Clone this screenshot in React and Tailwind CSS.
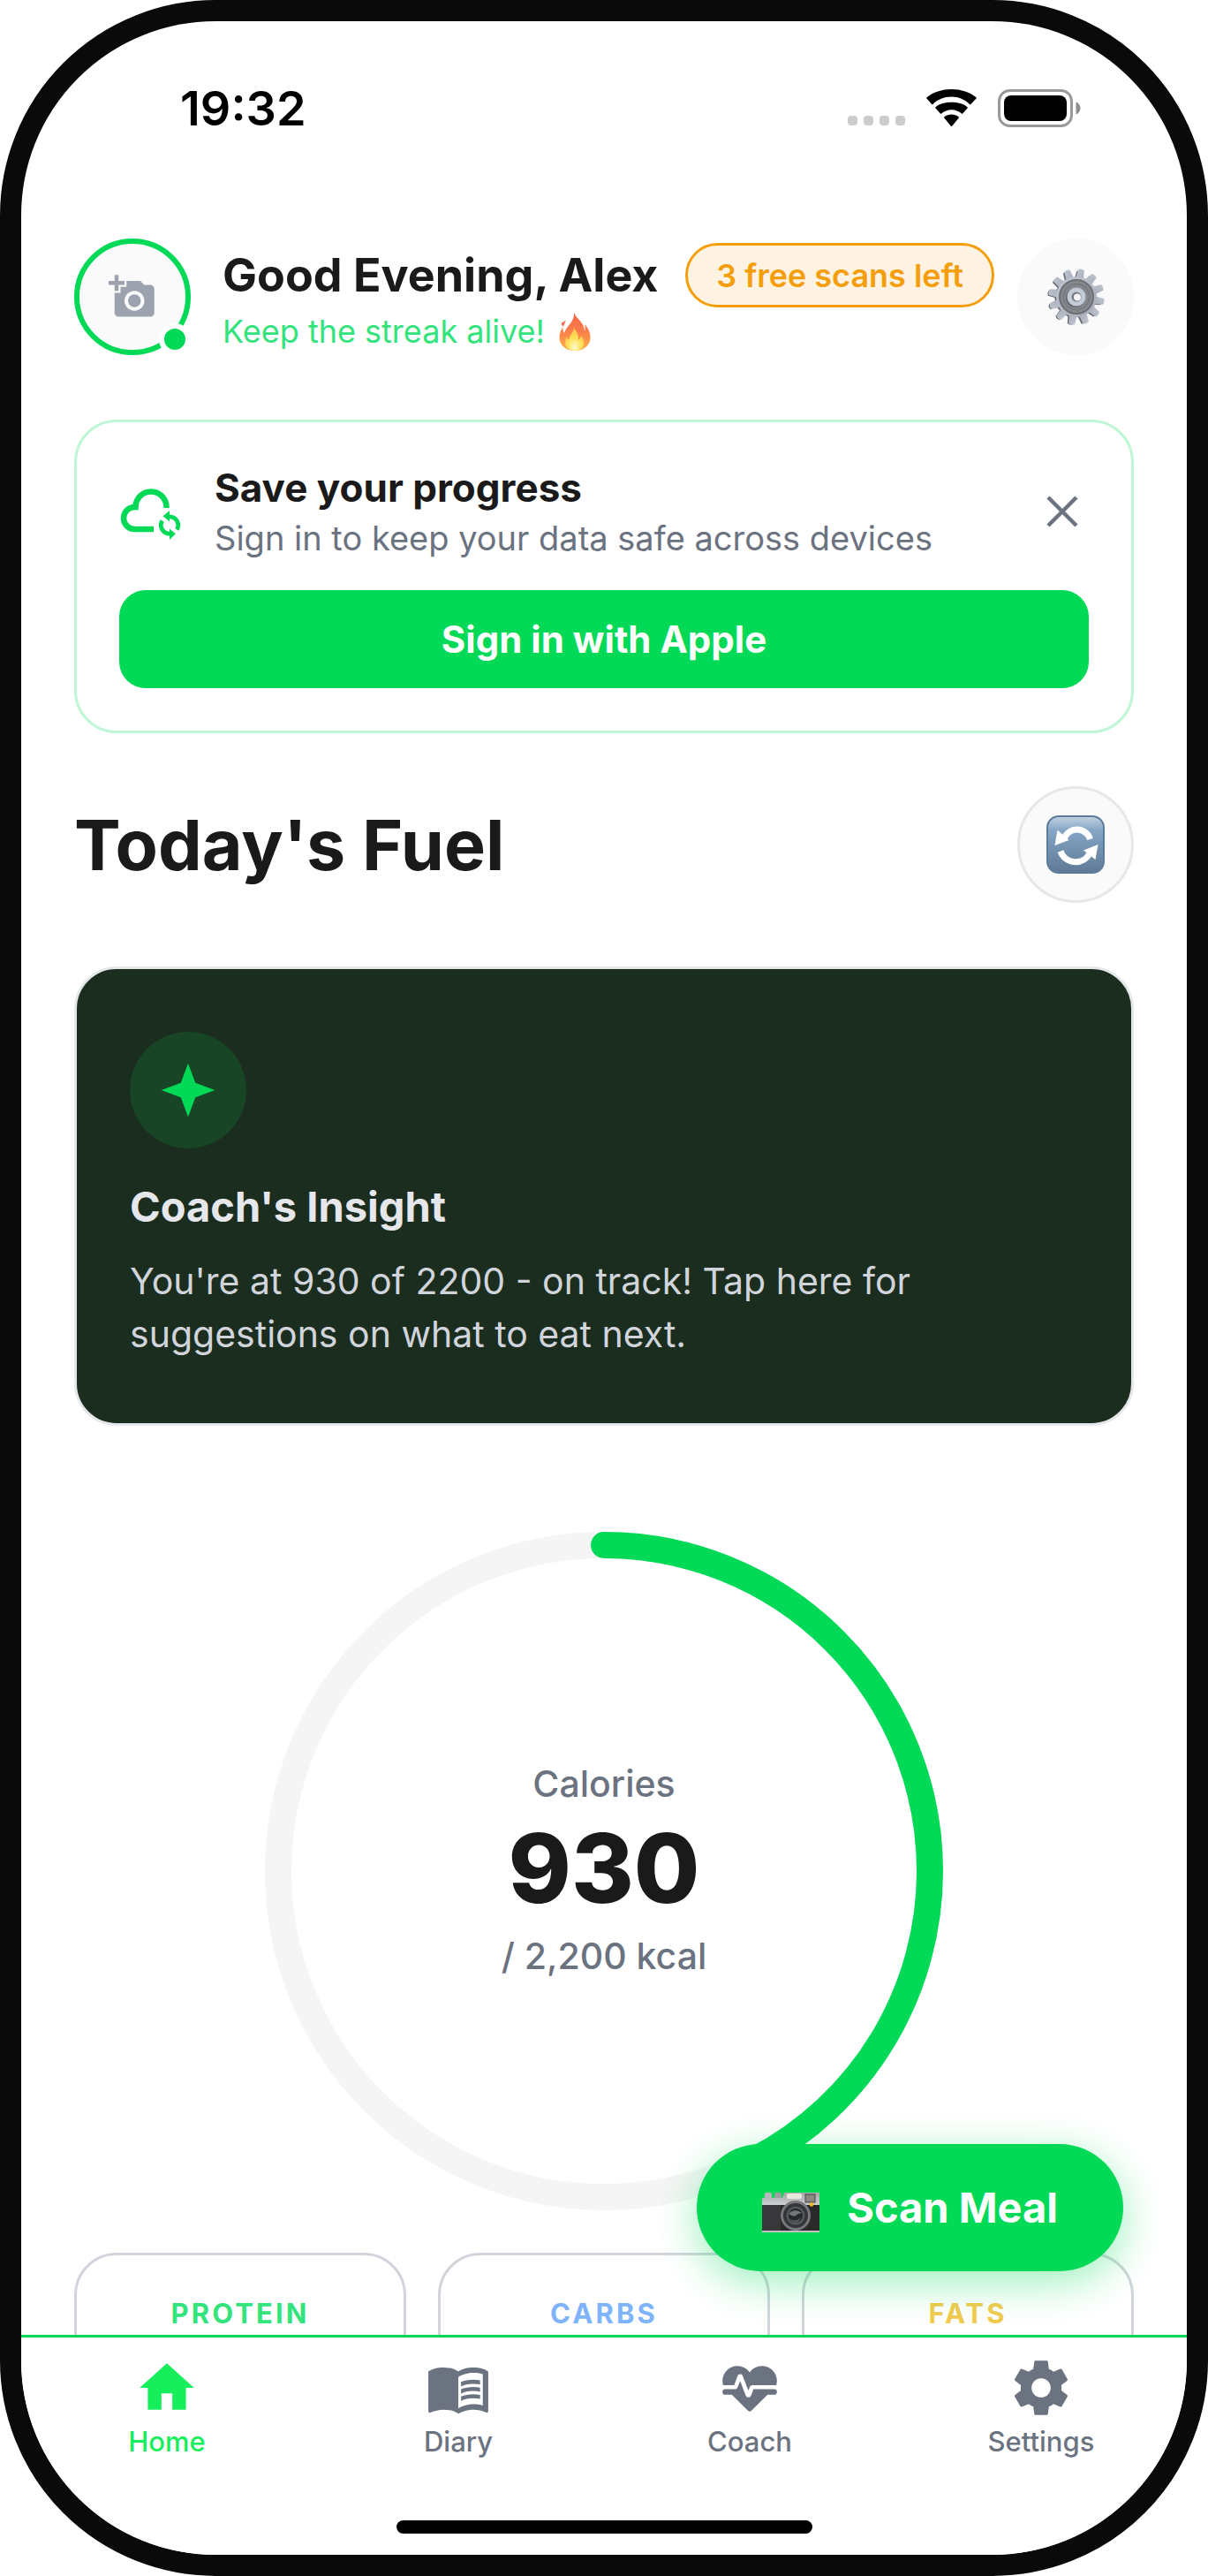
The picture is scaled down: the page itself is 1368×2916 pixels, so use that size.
import { MdAddAPhoto, MdHome, MdMenuBook } from "react-icons/md";

const GOAL = 2200;
const EATEN = 930;

const macros = [
  { label: "PROTEIN", color: "text-[#33e37c]" },
  { label: "CARBS", color: "text-[#7fb4fb]" },
  { label: "FATS", color: "text-[#f3cb50]" },
];

function WifiIcon() {
  return (
    <svg viewBox="0 0 57 42" className="w-[57px] h-[42px]" fill="#000">
      <path d="M28.500 8.600c7.900 0 15.100 3.100 20.400 8.300.4.400 1 .4 1.400 0l6.200-6.300c.3-.4.3-1 0-1.400C49.400 3.400 39.400 0 28.500 0S7.600 3.400.5 9.200c-.4.400-.4 1 0 1.400l5.600 6.400c.4.400 1 .4 1.400 0 5.400-5.300 12.700-8.400 21-8.400Z" />
      <path d="M28.500 23.200c4.400 0 8.300 1.600 11.400 4.300.4.400 1 .3 1.300 0l5.300-5.900c.4-.4.400-1 0-1.400-4.800-4.200-11-5.500-18-5.500s-13.200 1.300-18 5.500c-.4.400-.4 1 0 1.400l5.300 5.900c.3.300.9.400 1.300 0 3.100-2.700 7-4.300 11.400-4.300Z" />
      <path d="M36.700 32.600c.4-.4.400-1-.1-1.300-4.700-3.600-11.500-3.600-16.200 0-.5.300-.5.900-.1 1.300l7.300 8.900c.5.600 1.300.6 1.800 0l7.300-8.900Z" />
    </svg>
  );
}

function BatteryIcon() {
  return (
    <svg viewBox="0 0 94 43" className="w-[94px] h-[43px]">
      <rect x="1.500" y="1.500" width="82" height="40" rx="12" fill="none" stroke="#999" strokeWidth="3" />
      <rect x="7" y="7" width="71" height="29" rx="8" fill="#000" />
      <path d="M88.500 14.500c3 1 5 3.800 5 7s-2 6-5 7Z" fill="#8d8d8d" />
    </svg>
  );
}

function FlameEmoji() {
  return (
    <svg viewBox="0 0 36 43" className="w-9 h-[43px]">
      <defs>
        <linearGradient id="flame" x1="0" y1="0" x2="0" y2="1">
          <stop offset="0" stopColor="#f4654a" />
          <stop offset="0.5" stopColor="#fb7f4a" />
          <stop offset="1" stopColor="#fdb447" />
        </linearGradient>
        <radialGradient id="flameCore" cx="0.5" cy="0.85" r="0.7">
          <stop offset="0" stopColor="#fffbd0" />
          <stop offset="0.5" stopColor="#ffe25a" />
          <stop offset="1" stopColor="#ffc14d" />
        </radialGradient>
      </defs>
      <path d="M17 0c2 6 12 11 12 21 1-2 1-5 0-8 4 4 7 10 6.500 16C35 37 28 43 18 43S1 37 .5 29c-.3-5 1.500-9 4-13-.3 3 .1 5 1.500 7 1-4 4-7 7-11 3-4 4.500-8 4-12Z" fill="url(#flame)" />
      <path d="M3 11c2 0 3-2 5-2-1 2-2 3-2 5-1 2-4 1-3-3Z" fill="#f9745a" />
      <path d="M17 15c0 4 3 5 4 9 1 3 1 5 .5 7 2-1 3-3 3.500-5 2 3 4 6 3 10-1 4-5 7-10 7s-11-3-11-9c0-3 1-5 2-7 0 2 1 3 2 4 1-6 6-9 6-16Z" fill="url(#flameCore)" />
    </svg>
  );
}

function GearEmoji() {
  const teeth = Array.from({ length: 12 }, (_, i) => i * 30 + 10);
  return (
    <svg viewBox="0 0 66 66" className="w-[66px] h-[66px]">
      <defs>
        <linearGradient id="steel" x1="0" y1="0" x2="1" y2="1">
          <stop offset="0" stopColor="#bfc7d2" />
          <stop offset="1" stopColor="#a9acb8" />
        </linearGradient>
      </defs>
      {/* darker copy behind gives the edge depth */}
      <g fill="#62666d">
        {teeth.map((a) => (
          <path key={a} d="M29 13l1-10q3-2 6 0l1 10Z" transform={`translate(-1 1) rotate(${a} 33 33)`} />
        ))}
        <circle cx="32" cy="34" r="22.500" />
      </g>
      <g fill="url(#steel)">
        {teeth.map((a) => (
          <path key={a} d="M28.500 13l1-11q3.500-2 7 0l1 11Z" transform={`translate(1 0) rotate(${a} 33 33)`} />
        ))}
        <circle cx="34" cy="33" r="23" />
      </g>
      <circle cx="34" cy="33" r="19" fill="#85888d" />
      <circle cx="34" cy="33" r="19" fill="none" stroke="#6c7075" strokeWidth="2" />
      <circle cx="34" cy="33" r="14.500" fill="none" stroke="#74777c" strokeWidth="1.500" />
      <circle cx="33" cy="34" r="11" fill="#66696e" />
      <circle cx="34" cy="33" r="10.500" fill="#c3cbd6" />
      <circle cx="34" cy="33" r="5.500" fill="#777b83" />
      <circle cx="35" cy="33.500" r="4" fill="#f4f4f5" />
    </svg>
  );
}

function RefreshEmoji() {
  return (
    <svg viewBox="0 0 66 66" className="w-[66px] h-[66px]">
      <defs>
        <linearGradient id="key" x1="0" y1="0" x2="0" y2="1">
          <stop offset="0" stopColor="#c3d3e2" />
          <stop offset="0.250" stopColor="#84a5c5" />
          <stop offset="1" stopColor="#5f7a96" />
        </linearGradient>
      </defs>
      <rect x="1" y="1" width="64" height="64" rx="13" fill="url(#key)" stroke="#5c7c9c" strokeWidth="2" />
      <g fill="none" stroke="#fff" strokeWidth="7">
        <path d="M20 26.500A15.500 15.500 0 0 1 49.500 27" />
        <path d="M16 40.500A18 18 0 0 0 49 43" />
      </g>
      <path d="M12.500 16.500 9.500 34l16-6Z" fill="#fff" />
      <path d="M58.500 33 42 39.500l13.500 10.500Z" fill="#fff" />
    </svg>
  );
}

function CameraEmoji() {
  return (
    <svg viewBox="0 -10 66 55" className="w-[66px] h-[55px]">
      <defs>
        <linearGradient id="camTop" x1="0" y1="0" x2="0" y2="1">
          <stop offset="0" stopColor="#a4a6a8" />
          <stop offset="1" stopColor="#cdced0" />
        </linearGradient>
      </defs>
      <rect x="3" y="0" width="8" height="8" rx="1.500" fill="#b6b7b9" />
      <rect x="14" y="0" width="8" height="8" rx="1.500" fill="#9d9fa1" />
      <path d="M0 7q0-1 1-1h22l2-6h40v14H0Z" fill="url(#camTop)" />
      <rect x="0" y="14" width="65" height="29" fill="#2a2a2b" />
      <rect x="0" y="14" width="21" height="29" fill="#38383a" />
      <rect x="0" y="43" width="65" height="2" fill="#bfc1c2" />
      <rect x="28" y="1" width="17" height="6" rx="2" fill="#eae8dd" />
      <rect x="49" y="2" width="11" height="9" fill="#8b8880" stroke="#454545" strokeWidth="1" />
      <circle cx="38" cy="26" r="17" fill="#77797c" />
      <circle cx="38" cy="26" r="14" fill="#333539" />
      <circle cx="38" cy="26" r="10.500" fill="#55595e" />
      <circle cx="38" cy="26" r="8" fill="#26292c" />
      <path d="M30 24q7-7 15-1-5 1-7 3t-8-2Z" fill="#6f757b" />
      <path d="M32 30q6 4 12-2-2 6-6 6t-6-4Z" fill="#53585d" />
      <circle cx="56" cy="13.500" r="2.200" fill="#f6b920" />
    </svg>
  );
}

function CloudSyncIcon() {
  return (
    <svg viewBox="5 -3 84 84" className="w-[84px] h-[84px]">
      <path d="M58.500 35v-1A17.500 17.500 0 0 0 23.500 34h-1A11.500 11.500 0 0 0 22.500 59H44" fill="none" stroke="#02da57" strokeWidth="6.500" />
      <path d="M62 44.800A9.700 9.700 0 0 1 70.300 59.500M62 64.200A9.700 9.700 0 0 1 53.700 49.500" fill="none" stroke="#02da57" strokeWidth="4.800" />
      <path d="M62 38v12.500l-7.500-6.200ZM62 58.500V71l6.800-6.700Z" fill="#02da57" />
    </svg>
  );
}

function SparkIcon() {
  return (
    <svg viewBox="0 0 24 24" className="w-[66px] h-[66px]" fill="#02da57">
      <path d="M12 1L9 9L1 12L9 15L12 23L15 15L23 12L15 9L12 1Z" />
    </svg>
  );
}

function HeartPulseIcon({ className }) {
  return (
    <svg viewBox="0 0 24 24" className={className} fill="currentColor">
      <path d="M7.500,4A5.500,5.500 0 0,0 2,9.500C2,10 2.090,10.500 2.220,11H6.300L7.570,7.630C7.870,6.830 9.050,6.750 9.430,7.630L11.500,13L12.090,11.580C12.220,11.250 12.570,11 13,11H21.780C21.910,10.500 22,10 22,9.500A5.500,5.500 0 0,0 16.500,4C14.640,4 13,4.930 12,6.340C11,4.930 9.360,4 7.500,4V4M3,12.500A1,1 0 0,0 2,13.500A1,1 0 0,0 3,14.500H5.440L11,20C12,20.900 12,20.900 13,20L18.560,14.500H21A1,1 0 0,0 22,13.500A1,1 0 0,0 21,12.500H13.400L12.470,14.800C12.070,15.810 10.920,15.670 10.550,14.830L8.500,9.500L7.540,11.830C7.390,12.210 7.050,12.500 6.600,12.500H3Z" />
    </svg>
  );
}

function CogIcon({ className }) {
  return (
    <svg viewBox="0 0 24 24" className={className} fill="currentColor">
      <path d="M12,15.500A3.500,3.500 0 0,1 8.500,12A3.500,3.500 0 0,1 12,8.500A3.500,3.500 0 0,1 15.500,12A3.500,3.500 0 0,1 12,15.500M19.430,12.970C19.470,12.650 19.500,12.330 19.500,12C19.500,11.670 19.470,11.340 19.430,11L21.540,9.370C21.730,9.220 21.780,8.950 21.660,8.730L19.660,5.270C19.540,5.050 19.270,4.960 19.050,5.050L16.560,6.050C16.040,5.660 15.500,5.320 14.870,5.070L14.500,2.420C14.460,2.180 14.250,2 14,2H10C9.750,2 9.540,2.180 9.500,2.420L9.130,5.070C8.500,5.320 7.960,5.660 7.440,6.050L4.950,5.050C4.730,4.960 4.460,5.050 4.340,5.270L2.340,8.730C2.210,8.950 2.270,9.220 2.460,9.370L4.570,11C4.530,11.340 4.500,11.670 4.500,12C4.500,12.330 4.530,12.650 4.570,12.970L2.460,14.630C2.270,14.780 2.210,15.050 2.340,15.270L4.340,18.730C4.460,18.950 4.730,19.030 4.950,18.950L7.440,17.940C7.960,18.340 8.500,18.680 9.130,18.930L9.500,21.580C9.540,21.820 9.750,22 10,22H14C14.250,22 14.460,21.820 14.500,21.580L14.870,18.930C15.500,18.670 16.040,18.340 16.560,17.940L19.050,18.950C19.270,19.030 19.540,18.950 19.660,18.730L21.660,15.270C21.780,15.050 21.730,14.780 21.540,14.630L19.430,12.970Z" />
    </svg>
  );
}

const tabs = [
  { label: "Home", Icon: MdHome, active: true },
  { label: "Diary", Icon: MdMenuBook },
  { label: "Coach", Icon: HeartPulseIcon },
  { label: "Settings", Icon: CogIcon },
];

function StatusBar() {
  return (
    <div className="h-[196px] shrink-0 flex items-center justify-between pl-[180px] pr-[120px]">
      <span className="text-[54px] font-semibold text-black">19:32</span>
      <div className="flex items-center">
        <div className="flex gap-[7px] self-end pb-0.5 mr-6">
          {[0, 1, 2, 3].map((i) => (
            <span key={i} className="size-[11px] rounded-[4px] bg-[#ccc]" />
          ))}
        </div>
        <WifiIcon />
        <div className="w-6" />
        <BatteryIcon />
      </div>
    </div>
  );
}

function Header() {
  return (
    <header className="flex items-start">
      <button
        aria-label="Add profile photo"
        className="relative size-[132px] shrink-0 rounded-full border-6 border-[#02da57] bg-[#fafafa] flex items-center justify-center"
      >
        <MdAddAPhoto className="size-[54px] text-[#9ca3af]" />
        <span className="absolute -right-1.5 -bottom-1.5 size-9 rounded-full border-6 border-white bg-[#02da57]" />
      </button>

      <div className="flex-1 ml-9 mr-[26px] pt-[5px]">
        <div className="flex items-center justify-between">
          <h1 className="text-[52px] leading-[72px] font-bold text-[#1a1a1a] whitespace-nowrap">
            Good Evening, Alex
          </h1>
          <span className="h-[73px] px-8 flex items-center rounded-full border-3 border-[#f59e0b] bg-[#fef3e2] text-[36px] font-semibold text-[#f59e0b] whitespace-nowrap">
            3 free scans left
          </span>
        </div>
        <p className="flex items-center gap-4 text-[36px] leading-[55px] text-[#33e37c]">
          Keep the streak alive! <FlameEmoji />
        </p>
      </div>

      <button
        aria-label="Preferences"
        className="size-[132px] shrink-0 rounded-full bg-[#fafafa] flex items-center justify-center"
      >
        <GearEmoji />
      </button>
    </header>
  );
}

function SaveCard() {
  return (
    <section className="mt-[72px] rounded-[48px] border-3 border-[#bff6d5] px-12 pt-11 pb-12">
      <div className="flex items-center">
        <CloudSyncIcon />
        <div className="flex-1 ml-6">
          <h2 className="text-[44px] leading-[60px] font-bold text-[#1a1a1a]">
            Save your progress
          </h2>
          <p className="text-[38px] leading-[54px] text-[#6b7280]">
            Sign in to keep your data safe across devices
          </p>
        </div>
        <button aria-label="Dismiss" className="p-3 text-[#6b7280]">
          <svg viewBox="0 0 36 36" className="size-9" fill="none" stroke="currentColor" strokeWidth="4.500">
            <path d="M2 2l32 32M34 2L2 34" />
          </svg>
        </button>
      </div>
      <button className="mt-8 w-full h-[111px] rounded-[30px] bg-[#02da57] text-[42px] font-bold text-white">
        Sign in with Apple
      </button>
    </section>
  );
}

function InsightCard() {
  return (
    <section className="mt-[72px] rounded-[48px] border-3 border-[#e5e7eb] bg-[#1b2d1f] px-[60px] pt-[71px] pb-[71px]">
      <div className="size-[132px] rounded-full bg-[#184525] flex items-center justify-center">
        <SparkIcon />
      </div>
      <h3 className="mt-8 text-[47px] leading-[68px] font-bold text-[#e5e7eb]">
        Coach's Insight
      </h3>
      <p className="mt-5 text-[41px] leading-[60px] max-w-[960px] text-[#d1d5db]">
        You're at 930 of 2200 - on track! Tap here for suggestions on what to
        eat next.
      </p>
    </section>
  );
}

function CalorieRing() {
  const r = 369;
  const length = 2 * Math.PI * r;

  return (
    <div className="mt-[120px] flex justify-center">
      <div className="relative size-[768px]">
        <svg viewBox="0 0 768 768" className="size-full -rotate-90" fill="none" strokeWidth="30">
          <circle cx="384" cy="384" r={r} stroke="#f5f5f5" />
          <circle
            cx="384"
            cy="384"
            r={r}
            stroke="#02da57"
            strokeLinecap="round"
            strokeDasharray={`${(EATEN / GOAL) * length} ${length}`}
          />
        </svg>
        <div className="absolute inset-0 flex flex-col items-center justify-center text-[#6b7280]">
          <span className="text-[41px] leading-[60px] font-medium">Calories</span>
          <span className="text-[108px] leading-[132px] font-extrabold text-[#1a1a1a]">
            {EATEN}
          </span>
          <span className="text-[41px] leading-[66px] font-medium">
            / {GOAL.toLocaleString("en-US")} kcal
          </span>
        </div>
      </div>
    </div>
  );
}

function TabBar() {
  return (
    <nav className="shrink-0 border-t-3 border-[#02da57] bg-white pb-6">
      <div className="grid grid-cols-4 pt-5">
        {tabs.map(({ label, Icon, active }) => (
          <a
            key={label}
            href="#"
            className={`flex flex-col items-center ${active ? "text-[#16ee5c]" : "text-[#6b7280]"}`}
          >
            <Icon className="size-[74px]" />
            <span className="mt-1.5 text-[31px] leading-9 font-medium">{label}</span>
          </a>
        ))}
      </div>
      <div className="mt-[71px] mx-auto w-[471px] h-[15px] rounded-full bg-black" />
    </nav>
  );
}

export default function App() {
  return (
    <div className="h-screen flex flex-col overflow-hidden rounded-[244px] border-24 border-[#0a0a0a] bg-white font-['Inter',sans-serif]">
      <StatusBar />

      <main className="relative flex-1 min-h-0 overflow-hidden px-[60px] pt-[50px]">
        <Header />
        <SaveCard />

        <div className="mt-15 flex items-center justify-between">
          <h2 className="text-[79px] leading-[100px] font-bold text-[#1a1a1a]">
            Today's Fuel
          </h2>
          <button
            aria-label="Refresh"
            className="size-[132px] rounded-full border-3 border-[#e5e7eb] bg-[#fafafa] flex items-center justify-center"
          >
            <RefreshEmoji />
          </button>
        </div>

        <InsightCard />
        <CalorieRing />

        {/* MACROS */}
        <div className="mt-12 grid grid-cols-3 gap-9">
          {macros.map((m) => (
            <div
              key={m.label}
              className="h-[300px] rounded-[48px] border-3 border-[#d1d5db] pt-12 text-center"
            >
              <span className={`text-[31px] leading-9 font-bold tracking-widest ${m.color}`}>
                {m.label}
              </span>
            </div>
          ))}
        </div>

        <button className="absolute right-[72px] bottom-[72px] h-36 px-[74px] flex items-center gap-[30px] rounded-full bg-[#02da57] text-[47px] font-bold text-white shadow-[0_12px_48px_rgba(2,218,87,0.4)]">
          <CameraEmoji />
          Scan Meal
        </button>
      </main>

      <TabBar />
    </div>
  );
}
